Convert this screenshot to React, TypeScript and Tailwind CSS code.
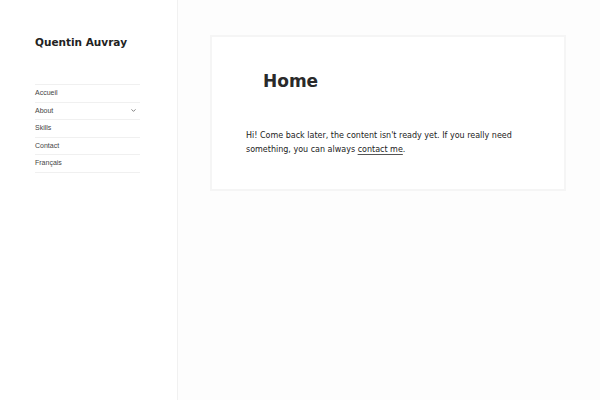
import { ChevronDown } from "lucide-react";

const navItems = ["Accueil", "About", "Skills", "Contact", "Français"];

function Sidebar() {
  return (
    <aside className="w-[178px] shrink-0 min-h-screen border-r border-[#f1f1f1] bg-white pl-[35px] pr-[37px] pt-[34px]">
      <h1 className="font-['DejaVu_Sans',sans-serif] text-[10.5px] leading-[16px] font-bold text-[#222]">
        Quentin Auvray
      </h1>
      <nav className="mt-[34px] border-t border-[#f0f0f0]">
        <ul>
          {navItems.map((item) => (
            <li
              key={item}
              className="flex h-[17.6px] items-center justify-between border-b border-[#f0f0f0] font-['Liberation_Sans',Arial,sans-serif] text-[7px] text-[#444]"
            >
              <span>{item}</span>
              {item === "About" && <ChevronDown className="mr-[3px] h-[7px] w-[7px] text-[#555]" strokeWidth={2.5} />}
            </li>
          ))}
        </ul>
      </nav>
    </aside>
  );
}

export default function App() {
  return (
    <div className="flex min-h-screen w-full bg-[#fdfdfd]">
      <Sidebar />
      <main className="flex-1 pl-[32px] pr-[34px] pt-[35px]">
        <article className="h-[156px] w-[356px] border-2 border-[#f5f5f5] bg-white pl-[34px] pt-[32px] font-['DejaVu_Sans',sans-serif]">
          <h2 className="pl-[17px] text-[17px] leading-[24px] font-bold text-[#2a2a2a]">Home</h2>
          <p className="mt-[36px] w-[290px] text-[8px] leading-[14px] text-[#222]">
            Hi! Come back later, the content isn't ready yet. If you really need something, you can always{" "}
            <a href="#" className="text-[#222] underline decoration-[#555] underline-offset-2">
              contact me
            </a>
            .
          </p>
        </article>
      </main>
    </div>
  );
}
